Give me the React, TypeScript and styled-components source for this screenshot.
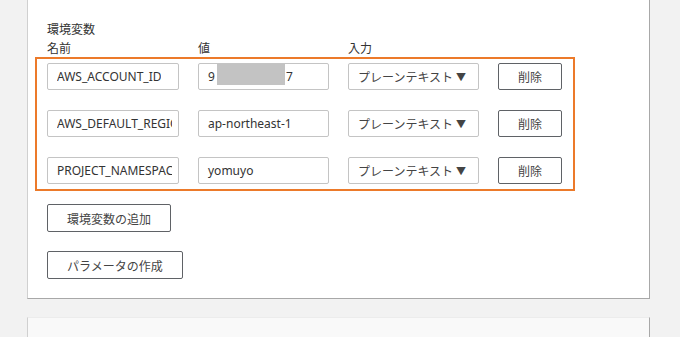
import React from 'react'
import styled, { createGlobalStyle } from 'styled-components'

const GlobalStyle = createGlobalStyle`
  html, body {
    margin: 0;
    padding: 0;
    background: #f2f2f2;
  }
  * { box-sizing: border-box; }
`

type EnvVar = {
  name: string
  value: string
  redacted?: boolean
}

const vars: EnvVar[] = [
  { name: 'AWS_ACCOUNT_ID', value: '9', redacted: true },
  { name: 'AWS_DEFAULT_REGION', value: 'ap-northeast-1' },
  { name: 'PROJECT_NAMESPACE', value: 'yomuyo' },
]

const App = () => {
  return (
    <Page>
      <GlobalStyle />
      <Card>
        <SectionLabel>環境変数</SectionLabel>
        <HeaderRow>
          <ColumnLabel>名前</ColumnLabel>
          <ColumnLabel>値</ColumnLabel>
          <ColumnLabel>入力</ColumnLabel>
        </HeaderRow>

        {/* the orange frame is the screenshot's highlight around the rows */}
        <Highlight>
          {vars.map((v) => (
            <VarRow key={v.name}>
              <Field title={v.name}>
                <FieldText>{v.name}</FieldText>
              </Field>
              <Field>
                {v.value}
                {v.redacted && (
                  <>
                    <Redacted />7
                  </>
                )}
              </Field>
              <Select>
                プレーンテキスト<Caret>▼</Caret>
              </Select>
              <Button $small>削除</Button>
            </VarRow>
          ))}
        </Highlight>

        <Actions>
          <Button>環境変数の追加</Button>
          <Button>パラメータの作成</Button>
        </Actions>
      </Card>
      <NextCard />
    </Page>
  )
}

export default App

const Page = styled.div`
  height: 337px;
  overflow: hidden;
  padding: 0 30px 0 27px;
  background: #f2f2f2;
  font-family: 'Noto Sans', 'Noto Sans CJK JP', sans-serif;
  color: #333;
`

const Card = styled.section`
  background: #fff;
  border-left: 1px solid #d0d0d0;
  border-right: 1px solid #a8a8a8;
  border-bottom: 1px solid #a8a8a8;
  padding: 23px 20px 19px 19px;
`

const SectionLabel = styled.div`
  font-size: 12px;
  line-height: 14px;
  color: #333;
`

const HeaderRow = styled.div`
  display: grid;
  grid-template-columns: 132px 131px 131px;
  column-gap: 19px;
  margin-top: 5px;
`

const ColumnLabel = styled.div`
  font-size: 12px;
  line-height: 14px;
  color: #333;
`

const Highlight = styled.div`
  display: flex;
  flex-direction: column;
  gap: 20px;
  width: fit-content;
  margin: 1px 0 0 -12px;
  padding: 4px 11px 5px 10px;
  border: 2px solid #ec7a2a;
`

const VarRow = styled.div`
  display: grid;
  grid-template-columns: 132px 131px 131px 64px;
  column-gap: 19px;
  height: 27px;
`

const Field = styled.div`
  display: flex;
  align-items: center;
  height: 27px;
  padding: 0 6px 0 9px;
  border: 1px solid #c4c4c4;
  border-radius: 2px;
  background: #fff;
  font-size: 12px;
  color: #333;
  white-space: nowrap;
  overflow: hidden;
`

const FieldText = styled.span`
  min-width: 0;
  overflow: hidden;
  white-space: nowrap;
`

const Redacted = styled.span`
  display: inline-block;
  align-self: flex-start;
  flex: none;
  width: 68px;
  height: 21px;
  margin: 0 1px 0 2px;
  background: #c3c3c3;
`

const Select = styled.div`
  display: flex;
  align-items: center;
  height: 27px;
  padding: 0 9px;
  border: 1px solid #c4c4c4;
  border-radius: 2px;
  background: #fff;
  font-size: 12px;
  color: #444;
  white-space: nowrap;
`

const Caret = styled.span`
  font-size: 10px;
  margin-left: 3px;
  color: #444;
`

const Button = styled.button<{ $small?: boolean }>`
  height: ${(p) => (p.$small ? '27px' : '28px')};
  padding: 0 ${(p) => (p.$small ? '0' : '19px')};
  width: ${(p) => (p.$small ? '64px' : 'auto')};
  border: 1px solid #5f6266;
  border-radius: 2px;
  background: #fff;
  font-family: 'Noto Sans CJK JP', sans-serif;
  font-size: 12px;
  color: #444;
  cursor: pointer;
`

const Actions = styled.div`
  display: flex;
  flex-direction: column;
  align-items: flex-start;
  gap: 19px;
  margin-top: 13px;
`

const NextCard = styled.section`
  height: 60px;
  margin-top: 18px;
  background: #f9f9f9;
  border-top: 1px solid #ececec;
  border-left: 1px solid #d0d0d0;
  border-right: 1px solid #a8a8a8;
`
